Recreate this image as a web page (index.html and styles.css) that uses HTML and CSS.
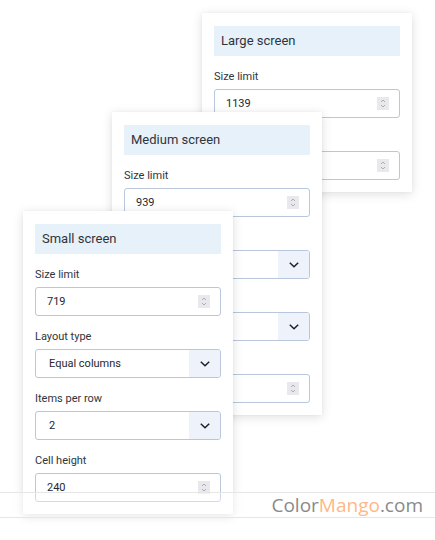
FILE: index.html
```html
<!DOCTYPE html>
<html>
<head>
<meta charset="utf-8">
<link rel="stylesheet" href="styles.css">
</head>
<body>
<div class="stage">
  <section class="card card-large">
    <div class="card-title">Large screen</div>
    <div class="field">
      <label class="field-label">Size limit</label>
      <div class="control"><span class="value">1139</span><span class="spin"><svg width="12" height="13" viewBox="0 0 12 13"><rect width="12" height="13" fill="#e9e9ed"/><path d="M4 5 L6 3 L8 5 M4 8 L6 10 L8 8" fill="none" stroke="#a6a6ae" stroke-width="0.9"/></svg></span></div>
    </div>
    <div class="field">
      <label class="field-label">Cell height</label>
      <div class="control"><span class="value">240</span><span class="spin"><svg width="12" height="13" viewBox="0 0 12 13"><rect width="12" height="13" fill="#e9e9ed"/><path d="M4 5 L6 3 L8 5 M4 8 L6 10 L8 8" fill="none" stroke="#a6a6ae" stroke-width="0.9"/></svg></span></div>
    </div>
  </section>

  <section class="card card-medium">
    <div class="card-title">Medium screen</div>
    <div class="field">
      <label class="field-label">Size limit</label>
      <div class="control"><span class="value">939</span><span class="spin"><svg width="12" height="13" viewBox="0 0 12 13"><rect width="12" height="13" fill="#e9e9ed"/><path d="M4 5 L6 3 L8 5 M4 8 L6 10 L8 8" fill="none" stroke="#a6a6ae" stroke-width="0.9"/></svg></span></div>
    </div>
    <div class="field">
      <label class="field-label">Layout type</label>
      <div class="control select"><span class="value">Equal columns</span><span class="drop"><svg width="10" height="6" viewBox="0 0 10 6"><path d="M0.8 0.8 L5 4.8 L9.2 0.8" fill="none" stroke="#1f1f24" stroke-width="1.5"/></svg></span></div>
    </div>
    <div class="field">
      <label class="field-label">Items per row</label>
      <div class="control select"><span class="value">3</span><span class="drop"><svg width="10" height="6" viewBox="0 0 10 6"><path d="M0.8 0.8 L5 4.8 L9.2 0.8" fill="none" stroke="#1f1f24" stroke-width="1.5"/></svg></span></div>
    </div>
    <div class="field">
      <label class="field-label">Cell height</label>
      <div class="control"><span class="value">240</span><span class="spin"><svg width="12" height="13" viewBox="0 0 12 13"><rect width="12" height="13" fill="#e9e9ed"/><path d="M4 5 L6 3 L8 5 M4 8 L6 10 L8 8" fill="none" stroke="#a6a6ae" stroke-width="0.9"/></svg></span></div>
    </div>
  </section>

  <section class="card card-small">
    <div class="card-title">Small screen</div>
    <div class="field">
      <label class="field-label">Size limit</label>
      <div class="control"><span class="value">719</span><span class="spin"><svg width="12" height="13" viewBox="0 0 12 13"><rect width="12" height="13" fill="#e9e9ed"/><path d="M4 5 L6 3 L8 5 M4 8 L6 10 L8 8" fill="none" stroke="#a6a6ae" stroke-width="0.9"/></svg></span></div>
    </div>
    <div class="field">
      <label class="field-label">Layout type</label>
      <div class="control select"><span class="value">Equal columns</span><span class="drop"><svg width="10" height="6" viewBox="0 0 10 6"><path d="M0.8 0.8 L5 4.8 L9.2 0.8" fill="none" stroke="#1f1f24" stroke-width="1.5"/></svg></span></div>
    </div>
    <div class="field">
      <label class="field-label">Items per row</label>
      <div class="control select"><span class="value">2</span><span class="drop"><svg width="10" height="6" viewBox="0 0 10 6"><path d="M0.8 0.8 L5 4.8 L9.2 0.8" fill="none" stroke="#1f1f24" stroke-width="1.5"/></svg></span></div>
    </div>
    <div class="field">
      <label class="field-label">Cell height</label>
      <div class="control"><span class="value">240</span><span class="spin"><svg width="12" height="13" viewBox="0 0 12 13"><rect width="12" height="13" fill="#e9e9ed"/><path d="M4 5 L6 3 L8 5 M4 8 L6 10 L8 8" fill="none" stroke="#a6a6ae" stroke-width="0.9"/></svg></span></div>
    </div>
  </section>
</div>
<div class="watermark"><span class="wm-gray">Color</span><span class="wm-orange">Mango</span><span class="wm-gray">.com</span></div>
</body>
</html>
```

FILE: styles.css
```css
html, body {
  margin: 0;
  padding: 0;
  background: #ffffff;
}
body {
  width: 435px;
  height: 540px;
  overflow: hidden;
  position: relative;
  font-family: Roboto, "Liberation Sans", sans-serif;
  color: #333640;
}
.stage {
  display: grid;
  grid-template-columns: 1fr;
  grid-template-rows: auto;
  align-items: start;
  justify-items: start;
}
.card {
  grid-area: 1 / 1;
  width: 186px;
  padding: 13px 12px 12px 12px;
  background: #ffffff;
  box-shadow: 0 2px 10px rgba(0, 0, 0, 0.13), 0 0 3px rgba(0, 0, 0, 0.04);
  display: flex;
  flex-direction: column;
}
.card-large { margin: 13px 0 0 202px; }
.card-medium { margin: 112px 0 0 112px; }
.card-small { margin: 211px 0 0 23px; }
.card-title {
  height: 30px;
  line-height: 30px;
  background: #e7f1f9;
  padding-left: 7px;
  font-size: 13px;
  color: #30343d;
}
.field {
  display: flex;
  flex-direction: column;
  margin-top: 13px;
}
.field-label {
  font-size: 11px;
  line-height: 16px;
  height: 16px;
  margin-bottom: 4px;
  color: #30343d;
}
.control {
  box-sizing: border-box;
  height: 29px;
  border: 1px solid #b9c6dc;
  border-radius: 3px;
  display: flex;
  align-items: center;
  background: #ffffff;
  overflow: hidden;
}
.value {
  flex: 1;
  padding-left: 11px;
  font-size: 11px;
  color: #25272d;
}
.select .value { padding-left: 13px; }
.spin {
  width: 12px;
  height: 13px;
  margin-right: 10px;
  display: flex;
}
.drop {
  width: 31px;
  align-self: stretch;
  background: #eef3fb;
  display: flex;
  align-items: center;
  justify-content: center;
}
.watermark {
  position: absolute;
  left: 0;
  top: 492px;
  width: 435px;
  height: 24px;
  box-sizing: content-box;
  border-top: 1px solid #e6e6e6;
  border-bottom: 1px solid #e6e6e6;
  background: rgba(255, 255, 255, 0.35);
  display: flex;
  align-items: center;
  justify-content: flex-end;
  font-family: "Open Sans", "DejaVu Sans", sans-serif;
  font-size: 19px;
  line-height: 24px;
}
.watermark span:last-child { margin-right: 12px; }
.wm-gray { color: #8a8a8a; }
.wm-orange { color: #ffb887; }
```
